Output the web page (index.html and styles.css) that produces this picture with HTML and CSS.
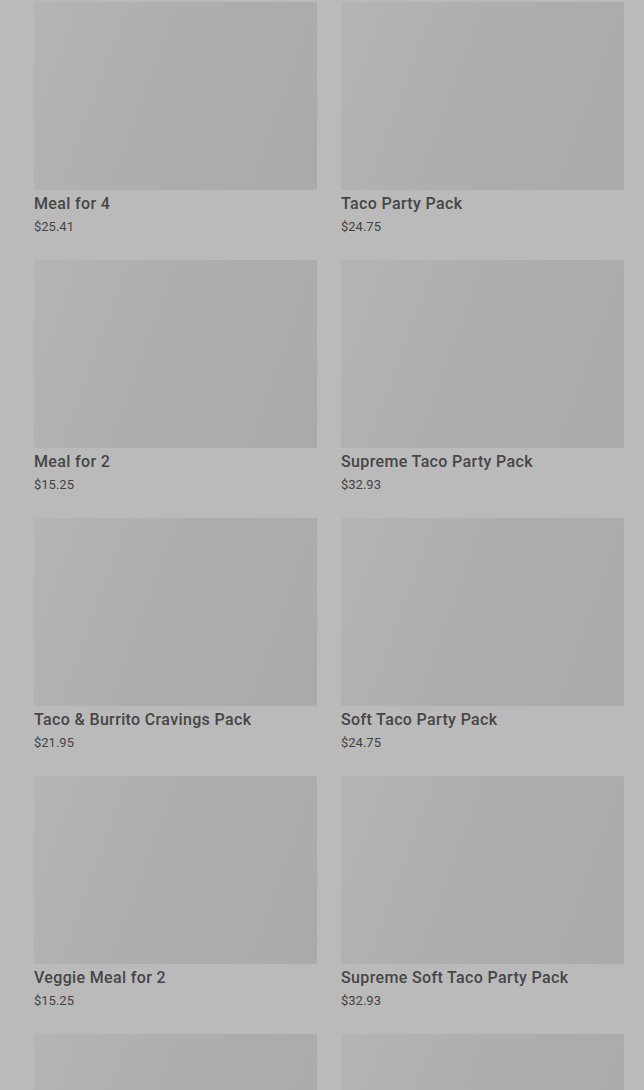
FILE: index.html
```html
<!DOCTYPE html>
<html>
    <head>
        <meta charset="utf-8">
        <title>Packs</title>
        <link rel="stylesheet" href="styles.css">
    </head>
    <body>
        <div class="grid">
            <div class="card"><div class="pic"></div><h3>Meal for 4</h3><p>$25.41</p></div>
            <div class="card"><div class="pic"></div><h3>Taco Party Pack</h3><p>$24.75</p></div>
            <div class="card"><div class="pic"></div><h3>Meal for 2</h3><p>$15.25</p></div>
            <div class="card"><div class="pic"></div><h3>Supreme Taco Party Pack</h3><p>$32.93</p></div>
            <div class="card"><div class="pic"></div><h3>Taco &amp; Burrito Cravings Pack</h3><p>$21.95</p></div>
            <div class="card"><div class="pic"></div><h3>Soft Taco Party Pack</h3><p>$24.75</p></div>
            <div class="card"><div class="pic"></div><h3>Veggie Meal for 2</h3><p>$15.25</p></div>
            <div class="card"><div class="pic"></div><h3>Supreme Soft Taco Party Pack</h3><p>$32.93</p></div>
            <div class="card"><div class="pic"></div><h3>&nbsp;</h3><p>&nbsp;</p></div>
            <div class="card"><div class="pic"></div><h3>&nbsp;</h3><p>&nbsp;</p></div>
        </div>
    </body>
</html>
```
FILE: styles.css
```css
*{box-sizing:border-box;}
body,html{
    margin: 0;
    width:100%;
    height:100%;
    overflow:hidden;
    font-family: Roboto, "Liberation Sans", sans-serif;
    background-color: #bababa;
    color: #444;
}
.grid{display:grid; grid-template-columns: 283px 283px; column-gap: 24px; row-gap: 24px; padding: 2px 20px 0 34px;}
.pic{height:188px; background: linear-gradient(110deg, #b4b4b4 0%, #aeaeae 45%, #aaaaaa 100%);}
.card h3{margin: 4px 0 0; font-size:16px; line-height:20px; font-weight:500; letter-spacing:0.35px; color:#464646;}
.card p{margin: 4px 0 0; font-size:13px; line-height:18px;}
```
